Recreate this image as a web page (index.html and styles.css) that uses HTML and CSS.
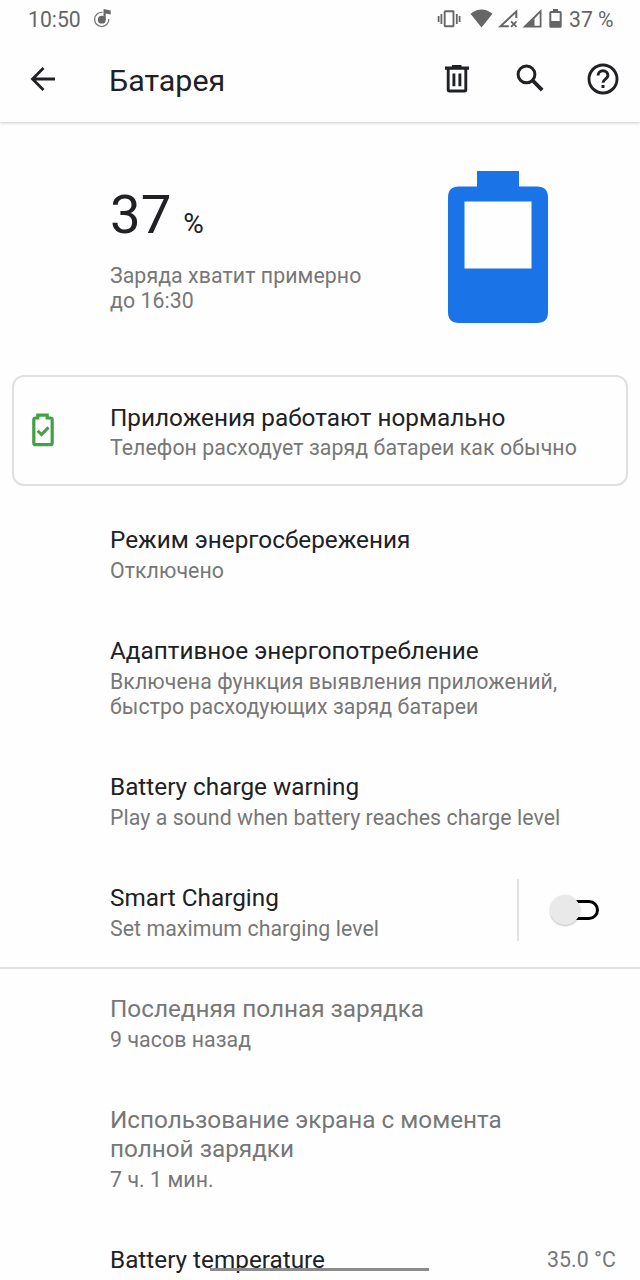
FILE: index.html
```html
<!DOCTYPE html>
<html lang="ru">
<head>
<meta charset="utf-8">
<title>Батарея</title>
<link rel="stylesheet" href="styles.css">
</head>
<body>
<div class="screen">
  <header class="top">
    <div class="status">
      <span class="clock">10:50</span>
      <svg class="music" width="18" height="20" viewBox="0 0 18 20"><circle cx="7.800" cy="11.700" r="3.900" fill="#666"/><path d="M8.600 4.400A7.100 7.100 0 1 0 14.800 11" fill="none" stroke="#777" stroke-width="1.300"/><path d="M9.500 12V1l7.200 1.500v4l-5-.9V12z" fill="#666"/></svg>
      <svg class="signals" width="126" height="22" viewBox="0 0 126 22">
        <g fill="none" stroke="#666" transform="translate(1)"><rect x="7.700" y="2.300" width="8.800" height="15" rx=".5" stroke-width="1.900"/><path d="M1.600 7v6M4.400 5v10M19.800 5v10M22.600 7v6" stroke-width="1.800"/></g>
        <path d="M34.500 4.700Q45.500-3.900 56.500 4.700L45.500 18.500z" fill="#666"/>
        <g fill="none" stroke="#666" transform="translate(.5)"><path d="M79.800 9V2.500L64 17.200h8.300" stroke-width="2"/><path d="M74.500 12.400l5.500 5.500M80 12.400l-5.500 5.500" stroke-width="1.800"/></g>
        <path d="M86.500 18.500L105.500 0v18.500zM98.500 16.800h5.200V4.200L98.500 9.800z" fill="#666" fill-rule="evenodd"/>
        <path d="M117 0h5v2h2q1.700 0 1.700 1.500v14q0 1.200-1.500 1.200h-9.500q-1.400 0-1.400-1.200v-14Q113.300 2 115 2h2zM115.300 4v8h8.400V4z" fill="#666" fill-rule="evenodd"/>
      </svg>
      <span class="level">37 %</span>
    </div>
    <div class="toolbar">
      <svg class="back" width="26" height="26" viewBox="0 0 26 26" fill="none" stroke="#202124" stroke-width="2.800"><path d="M25 13H3M13.500 2L2.500 13l11 11"/></svg>
      <h1 class="heading">Батарея</h1>
      <svg class="trash" width="26" height="30" viewBox="0 0 26 30"><path d="M8 1h9.500v1.500H25v3.300H1V2.500h7z" fill="#202124"/><path d="M4.200 5v20.700q0 1.300 1.300 1.300h15q1.300 0 1.300-1.300V5M9.900 9.500v12.800M15.900 9.500v12.800" fill="none" stroke="#202124" stroke-width="2.900"/></svg>
      <svg class="search" width="28" height="28" viewBox="0 0 28 28" fill="none" stroke="#202124" stroke-width="3"><circle cx="10.500" cy="10.400" r="8.400"/><path d="M16.500 16.400l9.700 9.700" stroke-width="3.700"/></svg>
      <svg class="help" width="32" height="32" viewBox="0 0 32 32"><circle cx="16" cy="16" r="14" fill="none" stroke="#202124" stroke-width="2.900"/><path d="M11.100 12.600a4.900 4.900 0 0 1 9.800 0c0 3.500-4.900 3.700-4.900 7.200" fill="none" stroke="#202124" stroke-width="2.900"/><path d="M14.500 22h3v3h-3z" fill="#202124"/></svg>
    </div>
  </header>

  <section class="summary">
    <div>
      <div class="percent">37<span class="sign">%</span></div>
      <p class="sub">Заряда хватит примерно<br>до 16:30</p>
    </div>
    <svg class="battery" width="100" height="152" viewBox="0 0 100 152"><path d="M29 0h42v15.500h18q11 0 11 11V141q0 11-11 11H11Q0 152 0 141V26.500q0-11 11-11h18zM16.500 30.500v67h67v-67z" fill="#1b73e8" fill-rule="evenodd"/></svg>
  </section>

  <section class="tip">
    <svg class="tip-icon" width="22" height="34" viewBox="0 0 22 34" fill="none" stroke="#43a047"><path d="M5.800 2.100h9.400v2.900h3.200q1.800 0 1.800 1.800v23.100q0 1.800-1.800 1.800H3.600q-1.800 0-1.800-1.800V6.800Q1.800 5 3.600 5h2.200z" stroke-width="3.200"/><path d="M5.700 17.700l3.800 3.800 7-7.100" stroke-width="3"/></svg>
    <div>
      <h2 class="title">Приложения работают нормально</h2>
      <p class="sub">Телефон расходует заряд батареи как обычно</p>
    </div>
  </section>

  <main class="list">
    <section class="item"><h2 class="title">Режим энергосбережения</h2><p class="sub">Отключено</p></section>
    <section class="item"><h2 class="title">Адаптивное энергопотребление</h2><p class="sub">Включена функция выявления приложений,<br>быстро расходующих заряд батареи</p></section>
    <section class="item"><h2 class="title">Battery charge warning</h2><p class="sub">Play a sound when battery reaches charge level</p></section>
    <section class="item smart">
      <div><h2 class="title">Smart Charging</h2><p class="sub">Set maximum charging level</p></div>
      <div class="toggle-area"><span class="toggle"><span class="track"></span><span class="thumb"></span></span></div>
    </section>
    <section class="item muted"><h2 class="title">Последняя полная зарядка</h2><p class="sub">9 часов назад</p></section>
    <section class="item muted"><h2 class="title">Использование экрана с момента<br>полной зарядки</h2><p class="sub">7 ч. 1 мин.</p></section>
    <section class="item temperature"><h2 class="title">Battery temperature</h2><span class="sub">35.0 °C</span></section>
  </main>
  <div class="nav-handle"></div>
</div>
</body>
</html>
```
FILE: styles.css
```css
* { box-sizing: border-box; }
body { margin: 0; background: #fefefe; font-family: Roboto, "Noto Sans", sans-serif; color: #202124; }
h1, h2, p { margin: 0; font-weight: 400; }
svg { display: block; flex: none; }
.screen { position: relative; width: 640px; height: 1280px; overflow: hidden; }
.top { height: 122px; box-shadow: 0 1px 3px rgba(0,0,0,.2); }
.status { display: flex; height: 38px; padding: 0 26px 0 28px; color: #666; font-size: 21.200px; line-height: 40px; }
.clock { width: 65.500px; }
.music { margin-top: 8px; }
.signals { margin: 9px 0 0 auto; }
.level { width: 51px; margin-left: 7px; margin-right: -6px; white-space: nowrap; }
.toolbar { display: flex; height: 84px; padding-left: 30px; }
.back { margin-top: 28px; }
.heading { width: 335px; margin-left: 53px; font-size: 30.400px; line-height: 86px; }
.trash { margin-top: 26px; }
.search { margin: 26px 0 0 46px; }
.help { margin: 25px 0 0 43px; }
.summary { display: flex; height: 253px; padding-left: 110px; }
.summary > div { width: 338px; padding-top: 57px; }
.percent { height: 84px; font-size: 54.500px; line-height: 70px; }
.sign { margin-left: 12px; font-size: 28px; }
.battery { margin-top: 49px; }
.tip { display: flex; height: 111px; margin: 0 12px; padding: 27px 0 0 18px; border: 2px solid #e0e0e0; border-radius: 12px; }
.tip .title { margin-bottom: 3px; }
.tip-icon { margin: 9px 56px 0 0; }
.title { margin-bottom: 4px; font-size: 24.300px; line-height: 28px; white-space: nowrap; }
.sub { color: #777; font-size: 21.300px; letter-spacing: .07px; line-height: 25px; white-space: nowrap; }
.list { padding-top: 14px; }
.item { padding: 26px 0 28px 110px; }
.muted .title { color: #777; line-height: 28.500px; margin-bottom: 3.500px; }
.smart { display: flex; height: 111px; border-bottom: 2px solid #e0e0e0; }
.smart > div:first-child { width: 407px; }
.toggle-area { width: 123px; height: 62px; margin-top: -5px; padding: 16px 0 0 31px; border-left: 2px solid #e2e2e2; }
.toggle { display: block; position: relative; width: 52px; height: 32px; }
.track { position: absolute; left: 13px; top: 5px; width: 36px; height: 20px; border: 3px solid #000; border-radius: 10px; }
.thumb { position: absolute; left: 0; top: 0; width: 30px; height: 30px; border-radius: 50%; background: #e9e9e9; box-shadow: 0 1px 2px rgba(0,0,0,.25); }
.temperature { display: flex; justify-content: space-between; padding-right: 24px; }
.temperature .sub { padding-top: 1px; }
.nav-handle { position: absolute; left: 210px; top: 1268px; width: 219px; height: 3px; background: #8c8c8c; }
```
